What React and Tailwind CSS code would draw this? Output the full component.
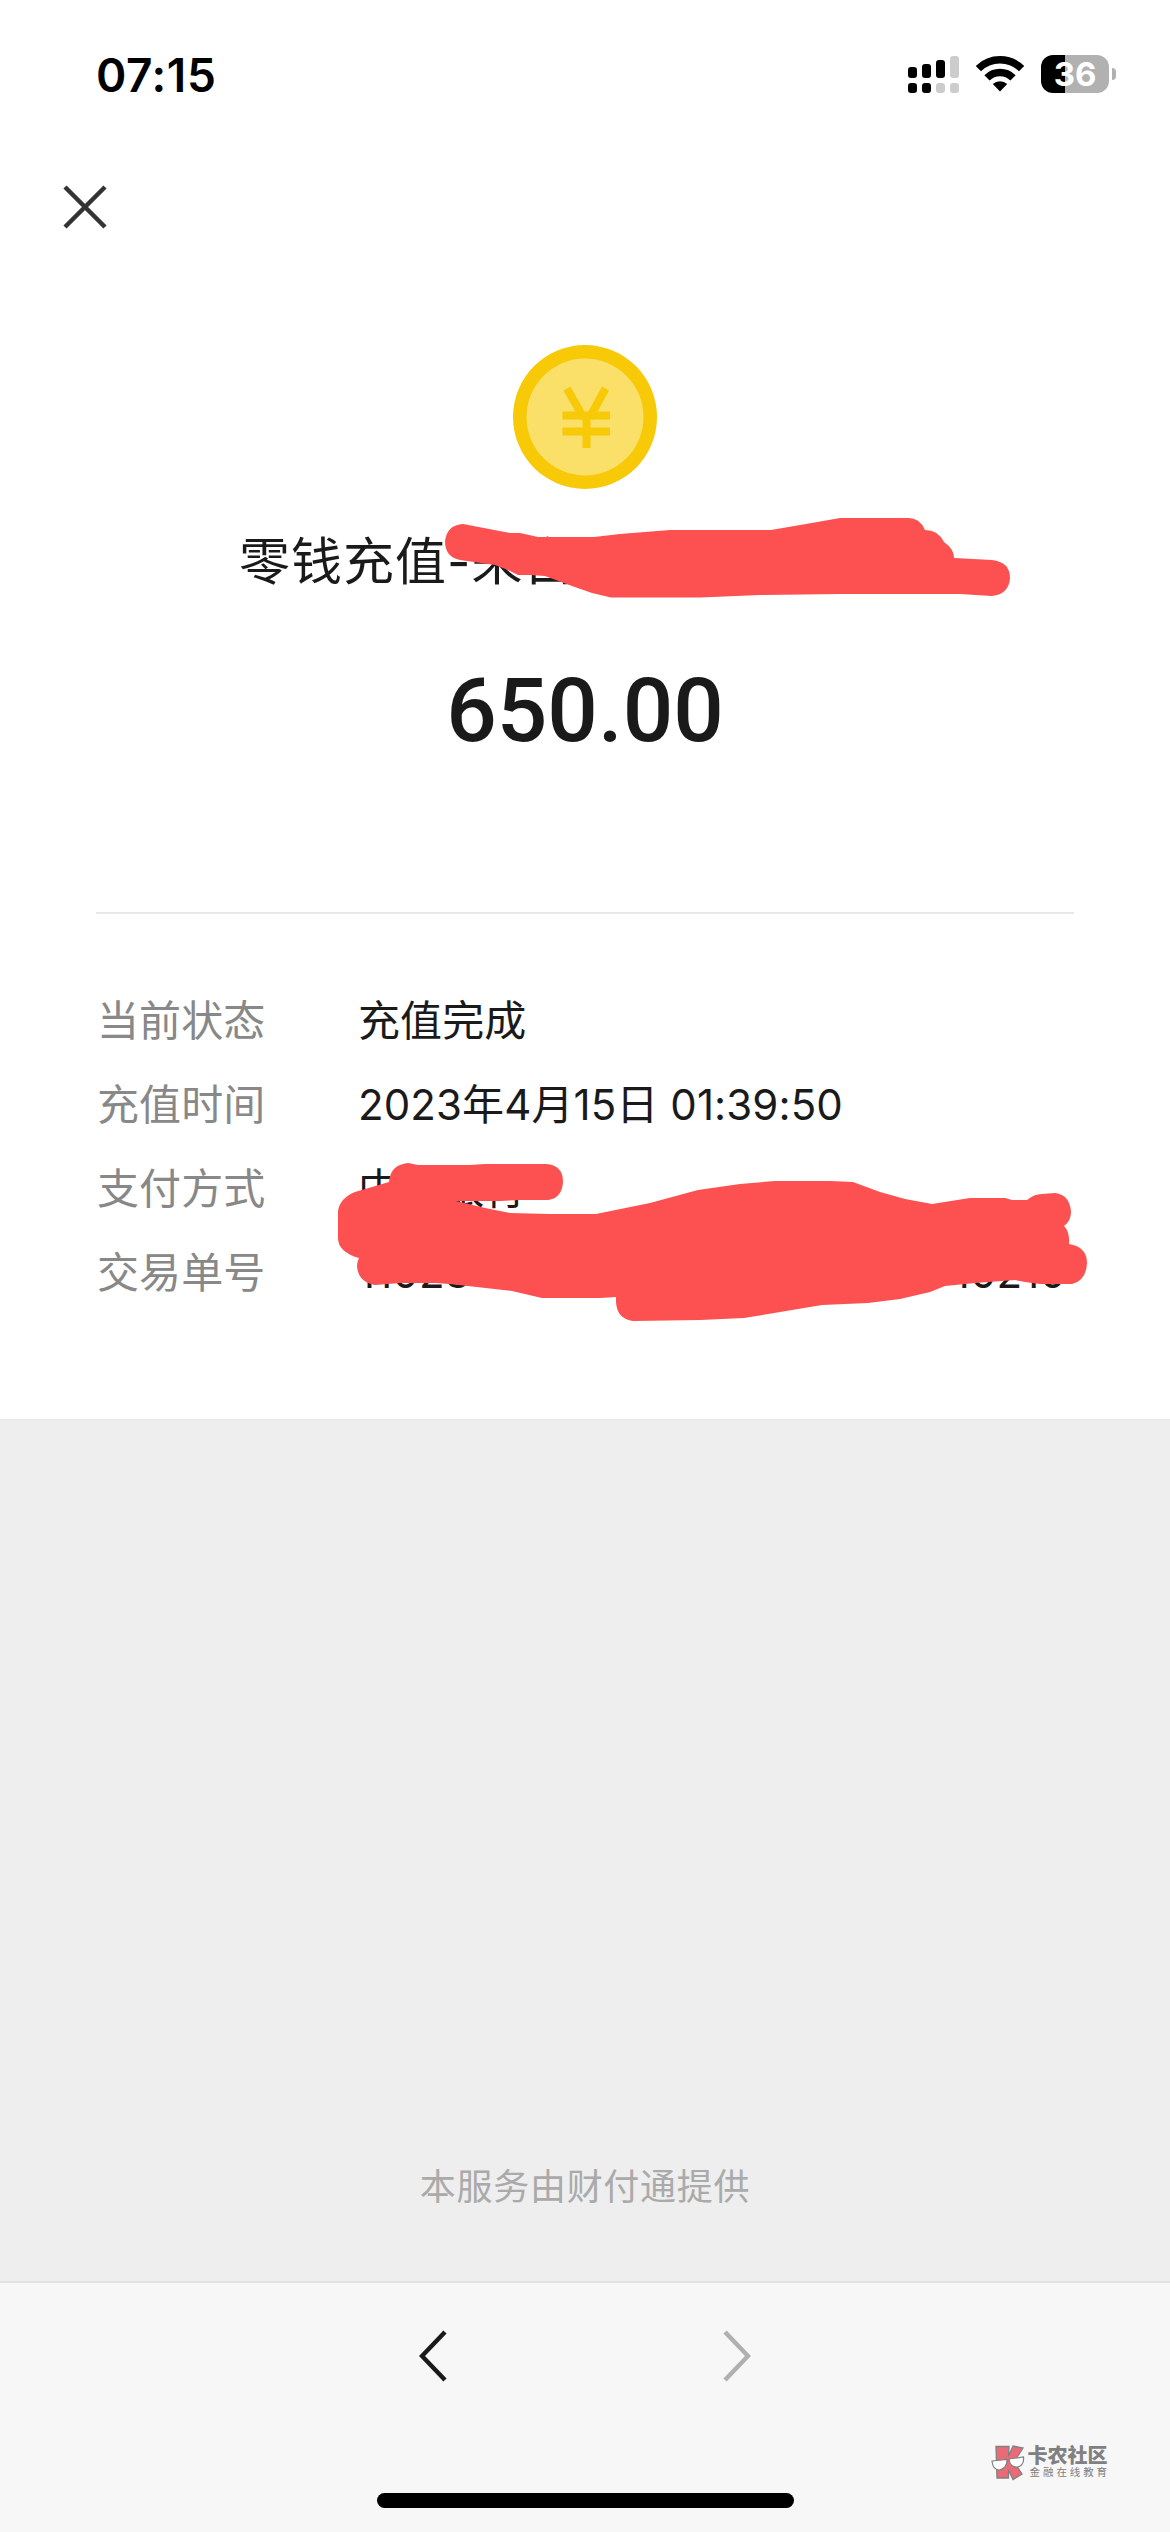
import React from "react";

const rows = [
  { label: "当前状态", value: "充值完成" },
  { label: "充值时间", value: "2023年4月15日 01:39:50" },
  { label: "支付方式", value: "中国银行" },
];

const StatusBar = () => (
  <div className="h-[150px] flex items-start justify-between pl-[96px] pr-[54px] pt-[46px]">
    <div className="text-[46px] leading-[58px] font-semibold text-black tracking-[0.6px]">
      07:15
    </div>
    <div className="flex items-center pt-[9px]">
      <svg width="52" height="38" viewBox="0 0 52 38">
        <g fill="#000">
          <rect x="0" y="12" width="9" height="11" rx="3" />
          <rect x="14" y="9" width="9" height="14" rx="3" />
          <rect x="28" y="5" width="9" height="18" rx="3" />
          <rect x="0" y="28" width="9" height="10" rx="3" />
          <rect x="14" y="28" width="9" height="10" rx="3" />
        </g>
        <g fill="#cccccc">
          <rect x="42" y="1" width="9" height="22" rx="3" />
          <rect x="28" y="28" width="9" height="10" rx="3" />
          <rect x="42" y="28" width="9" height="10" rx="3" />
        </g>
      </svg>
      <svg className="ml-4" width="48" height="38" viewBox="0 0 48 38">
        <g fill="none" stroke="#000" strokeWidth="7.5">
          <path d="M2.4 13.600A31 31 0 0 1 45.600 13.600" />
          <path d="M11 22.800A18.500 18.500 0 0 1 37 22.800" />
        </g>
        <path d="M24 36.500L16.800 29A10.500 10.500 0 0 1 31.200 29Z" fill="#000" />
      </svg>
      <div className="ml-[17px] w-[68px] h-[38px] rounded-[12px] flex items-center justify-center bg-linear-to-r from-black from-[24px] to-[#b1b1b1] to-[24px] text-white text-[33px] leading-[38px] font-bold">
        36
      </div>
      <div className="ml-[3px] w-[4px] h-[12px] rounded-r-full bg-[#b1b1b1]" />
    </div>
  </div>
);

const Coin = () => (
  <svg className="mx-auto" width="144" height="144" viewBox="0 0 144 144">
    <circle cx="72" cy="72" r="72" fill="#f7c906" />
    <circle cx="72" cy="72" r="58.500" fill="#fadf69" />
    <g fill="none" stroke="#f7c906" strokeWidth="8">
      <path d="M54 43.500L70.500 73M92.500 43.500L76.500 73" />
      <path d="M49.500 70.500H97M49.500 86.500H97M73.500 70V103" />
    </g>
  </svg>
);

const Watermark = () => (
  <div className="flex items-start gap-[3px]">
    <svg width="34" height="36" viewBox="0 0 34 36">
      <path
        d="M5 1.500H18L17.500 11L22 1L32 3L23 17L31 29L22 34.500L17.500 25V33H6Z"
        fill="#ea6a78"
        stroke="#808080"
        strokeWidth="1.300"
      />
      <g fill="#fff" stroke="#808080" strokeWidth="1.200">
        <path d="M1 16L16 14.500C16.500 20 13 24.500 8.500 25C4 25 1.500 21.500 1 16Z" />
        <path d="M18 14L32.500 12C33 17 31 21 26.500 22C22 22.500 18.500 20 18 14Z" />
      </g>
    </svg>
    <div className="text-[#808080] whitespace-nowrap">
      <div className="text-[20px] leading-[22px] font-black">卡农社区</div>
      <div className="text-[10.500px] leading-[12px] tracking-[2.900px] pl-[2px]">
        金融在线教育
      </div>
    </div>
  </div>
);

// red marker strokes over the private parts of the receipt
const Scribbles = () => (
  <svg
    className="absolute left-0 top-0"
    width="1170"
    height="1420"
    viewBox="0 0 1170 1420"
    fill="#fd5050">
    <path d="M463 524L510 533H520L538 537H594L620 534L670 530H771L806 524L840 518H908Q920 518 925 530Q938 530 944 542Q954 549 954 558L992 560Q1010 562 1010 578Q1009 594 992 596L960 594H840L760 595L700 597.500H611L592 593L572 586L545 576L530 575H518L508 570L495 565L460 560Q445 557 445 541Q447 525 463 524Z" />
    <path d="M389 1182Q390 1165 408 1163L418 1165H470L485 1164H546Q563 1165 563 1182Q562 1198 548 1200H520L500 1201H456L485 1208L510 1213L550 1214H596L650 1203L698 1190L740 1184L775 1181H830L853 1182L880 1192L905 1199L932 1204L970 1198H1005L1012 1200H1027Q1034 1194 1042 1194L1055 1193Q1070 1195 1071 1212Q1071 1221 1064 1226Q1070 1232 1069 1244Q1087 1247 1087 1263Q1086 1281 1072 1284H1040L1025 1282L1015 1280L975 1283L945 1286L930 1292L900 1299L868 1303L822 1305L780 1312L744 1318L700 1320L633 1321Q617 1319 616 1302V1297L600 1298H542L512 1291L450 1284L435 1283H400L375 1285Q358 1282 357 1266Q357 1262 359 1258Q338 1252 338 1238V1211Q340 1198 355 1192Z" />
  </svg>
);

const App = () => {
  return (
    <div
      lang="zh-CN"
      className="relative w-[1170px] h-[2532px] bg-white flex flex-col overflow-hidden font-['Inter','Noto_Sans_CJK_SC',sans-serif]">
      <StatusBar />

      <div className="pl-[63px] pt-[35px] h-[195px]">
        <svg width="44" height="44" viewBox="0 0 44 44">
          <path d="M2 2L42 42M42 2L2 42" stroke="#333" strokeWidth="4.5" />
        </svg>
      </div>

      <Coin />

      <div className="pl-[239px] mt-[37px] h-[72px] text-[51px] leading-[72px] tracking-[1px] text-[#1a1a1a] whitespace-nowrap">
        零钱充值-来自
      </div>

      <div className="mt-[60px] h-[106px] text-center font-['Roboto'] font-medium text-[89px] leading-[106px] text-[#1a1a1a]">
        650.00
      </div>

      <div className="mx-24 mt-[148px] h-[2px] bg-[#e8e8e8]" />

      <div className="mx-24 pt-[65px] h-[505px] text-[42px] leading-[84px] tracking-[0.100px] whitespace-nowrap">
        {rows.map((row) => (
          <div key={row.label} className="flex h-[84px]">
            <div className="w-[262px] pl-px text-[#888888]">{row.label}</div>
            <div className="text-[#1a1a1a]">{row.value}</div>
          </div>
        ))}
        <div className="flex h-[84px]">
          <div className="w-[262px] pl-px text-[#888888]">交易单号</div>
          <div className="w-[708px] flex justify-between text-[#1a1a1a]">
            <span>11023</span>
            <span>710210</span>
          </div>
        </div>
      </div>

      <div className="flex-1 bg-[#eeeeee] border-t border-[#e6e6e6] flex items-end justify-center pb-[68px] text-[36px] leading-[52px] tracking-[0.700px] text-[#aaaaaa]">
        本服务由财付通提供
      </div>

      <div className="h-[251px] bg-[#f7f7f7] border-t-2 border-[#e2e2e2] flex flex-col">
        <div className="flex justify-center gap-[274px] pt-[47px] h-[162px]">
          <svg width="29" height="52" viewBox="0 0 29 52" fill="none">
            <path d="M26 2L3 26L26 50" stroke="#1a1a1a" strokeWidth="4.500" />
          </svg>
          <svg width="29" height="52" viewBox="0 0 29 52" fill="none">
            <path d="M3 2L26 26L3 50" stroke="#b0b0b0" strokeWidth="4.500" />
          </svg>
        </div>
        <div className="flex justify-end pr-[60px] h-[48px]">
          <Watermark />
        </div>
        <div className="mx-auto w-[417px] h-[15px] rounded-full bg-black" />
      </div>

      <Scribbles />
    </div>
  );
};

export default App;
